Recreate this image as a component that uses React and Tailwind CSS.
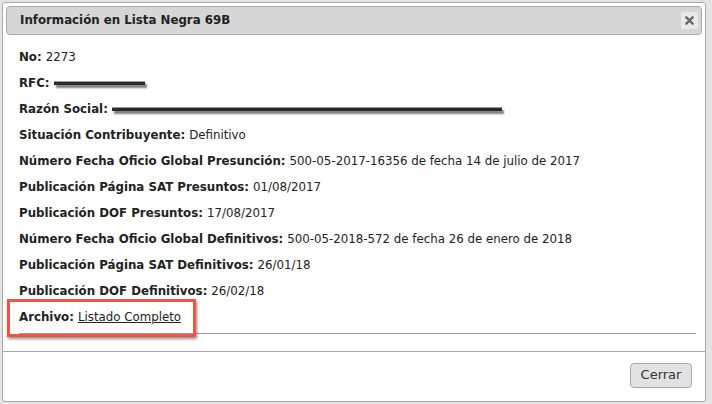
import React from "react";

const rows = [
  { label: "No:", value: "2273" },
  { label: "RFC:", redact: "w-[91px]" },
  { label: "Razón Social:", redact: "w-[390px]" },
  { label: "Situación Contribuyente:", value: "Definitivo" },
  {
    label: "Número Fecha Oficio Global Presunción:",
    value: "500-05-2017-16356 de fecha 14 de julio de 2017",
  },
  { label: "Publicación Página SAT Presuntos:", value: "01/08/2017" },
  { label: "Publicación DOF Presuntos:", value: "17/08/2017" },
  {
    label: "Número Fecha Oficio Global Definitivos:",
    value: "500-05-2018-572 de fecha 26 de enero de 2018",
  },
  { label: "Publicación Página SAT Definitivos:", value: "26/01/18" },
  { label: "Publicación DOF Definitivos:", value: "26/02/18" },
];

function Redacted({ width }) {
  return (
    <span className={`inline-block align-middle ml-[4px] h-[4px] bg-[#2a2a2a] border-t border-[#999] shadow-[2px_3px_2px_rgba(0,0,0,0.5)] ${width}`} />
  );
}

function App() {
  return (
    <div
      className="w-[712px] h-[404px] bg-[#e4e4e4] pt-[2px] pl-[2px] overflow-hidden text-[#222]"
      style={{ fontFamily: "'DejaVu Sans', Verdana, sans-serif" }}
    >
      <div className="w-[704px] h-[400px] bg-white border border-[#aaaaaa] rounded-[3px] flex flex-col p-[3px]">
        <div className="h-[29px] shrink-0 flex items-center justify-between bg-[#d6d6d6] border border-[#aaaaaa] rounded-[4px] pl-[13px] pr-[3px]">
          <span className="text-[11.8px] font-bold text-[#222]">
            Información en Lista Negra 69B
          </span>
          <button className="w-[17px] h-[17px] rounded-[3px] bg-[#e9e9e9] flex items-center justify-center">
            <svg width="9" height="9" viewBox="0 0 10 10">
              <path d="M1.5 1.5 L8.5 8.5 M8.5 1.5 L1.5 8.5" stroke="#666" strokeWidth="2.6" strokeLinecap="round" />
            </svg>
          </button>
        </div>

        <div className="flex-1 flex flex-col pl-[13px] pr-[6px] pt-[9px]">
          {rows.map((r) => (
            <div key={r.label} className="h-[26px] text-[11.8px] leading-[16px] flex items-center whitespace-nowrap">
              <span className="font-bold">{r.label}</span>
              {r.redact ? <Redacted width={r.redact} /> : <span className="ml-[4px]">{r.value}</span>}
            </div>
          ))}
          <div className="relative h-[26px] text-[11.8px] leading-[16px] flex items-center whitespace-nowrap">
            <span className="font-bold">Archivo:</span>
            <a href="#" className="ml-[4px] underline text-[#222]">Listado Completo</a>
            <div className="absolute left-[-12px] top-[-5px] w-[189px] h-[38px] border-[3px] border-[#ee5544] shadow-[1px_2px_3px_rgba(0,0,0,0.45)]" />
          </div>
          <div className="mt-[3px] border-t border-[#a0a0a0]" />
        </div>

        <div className="h-[47px] shrink-0 border-t border-[#a8a8a8] flex items-center justify-end pr-[13px] -mx-[3px]">
          <button className="w-[62px] h-[25px] bg-[#e2e2e2] border border-[#aaaaaa] rounded-[4px] text-[13px] text-[#333]">
            Cerrar
          </button>
        </div>
      </div>
    </div>
  );
}

export default App;
